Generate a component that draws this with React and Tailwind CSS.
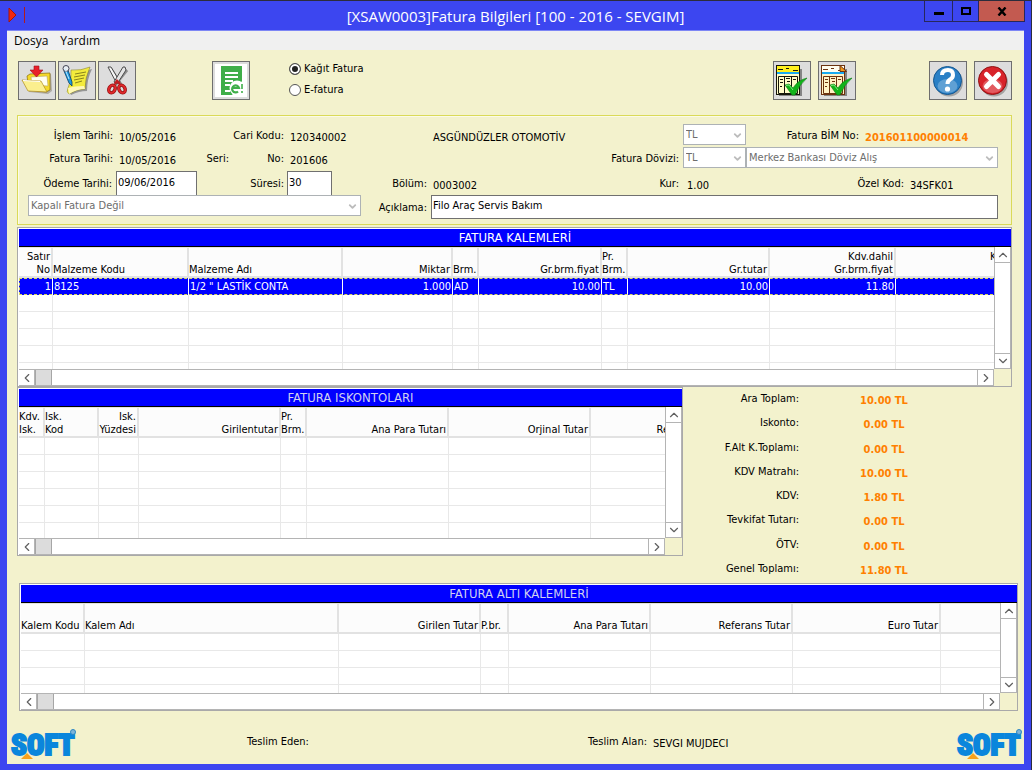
import React from 'react';
import { ChevronDown, ChevronUp, ChevronLeft, ChevronRight } from 'lucide-react';

const itemColumns = [
  { title: ['Satır', 'No'], width: 34, right: true },
  { title: ['Malzeme Kodu'], width: 136 },
  { title: ['Malzeme Adı'], width: 154 },
  { title: ['Miktar'], width: 110, right: true },
  { title: ['Brm.'], width: 26 },
  { title: ['Gr.brm.fiyat'], width: 123, right: true },
  { title: ['Pr.', 'Brm.'], width: 26 },
  { title: ['Gr.tutar'], width: 142, right: true },
  { title: ['Kdv.dahil', 'Gr.brm.fiyat'], width: 126, right: true },
  { title: ['Kdv.dahil', '\u00a0'], width: 142, right: true },
];

const itemRows = [
  ['1', '8125', '1/2 " LASTİK CONTA', '1.000', 'AD', '10.00', 'TL', '10.00', '11.80', ''],
];

const discountColumns = [
  { title: ['Kdv.', 'Isk.'], width: 26 },
  { title: ['Isk.', 'Kod'], width: 54 },
  { title: ['Isk.', 'Yüzdesi'], width: 40, right: true },
  { title: ['Girilentutar'], width: 142, right: true },
  { title: ['Pr.', 'Brm.'], width: 26 },
  { title: ['Ana Para Tutarı'], width: 142, right: true },
  { title: ['Orjinal Tutar'], width: 142, right: true },
  { title: ['Referans Tutar'], width: 140, right: true },
];

const extraColumns = [
  { title: ['Kalem Kodu'], width: 64 },
  { title: ['Kalem Adı'], width: 254 },
  { title: ['Girilen Tutar'], width: 142, right: true },
  { title: ['P.br.'], width: 28 },
  { title: ['Ana Para Tutarı'], width: 142, right: true },
  { title: ['Referans Tutar'], width: 142, right: true },
  { title: ['Euro Tutar'], width: 148, right: true },
  { title: [''], width: 142, right: true },
];

const totals = [
  ['Ara Toplam:', '10.00 TL'],
  ['Iskonto:', '0.00 TL'],
  ['F.Alt K.Toplamı:', '0.00 TL'],
  ['KDV Matrahı:', '10.00 TL'],
  ['KDV:', '1.80 TL'],
  ['Tevkifat Tutarı:', '0.00 TL'],
  ['ÖTV:', '0.00 TL'],
  ['Genel Toplamı:', '11.80 TL'],
];

function ToolButton({ label, children }) {
  return (
    <button
      type="button"
      aria-label={label}
      className="w-[38px] h-[39px] border border-[#6e6e6e] bg-[#dddddd] flex items-center justify-center"
    >
      {children}
    </button>
  );
}

function FolderIcon() {
  return (
    <svg width="34" height="34" viewBox="0 0 34 34">
      <path d="M9 12 L20 9 L22 11 L31 10 L32 27 L28 30 L9 28 Z" fill="#8f8a80" opacity="0.6" />
      <path d="M7 12 L10 10 L30 9 L30 26 L26 28 L9 26 Z" fill="#f5d928" stroke="#8a6d0c" strokeWidth="0.7" />
      <path d="M11 13 L27 12 L28 22 L12 21 Z" fill="#fffef0" stroke="#b9a860" strokeWidth="0.6" />
      <path d="M2 16 L21 17 L27 28 L8 27 Z" fill="#fbef8e" stroke="#b08d1c" strokeWidth="0.7" />
      <path d="M3 16.500 L20 17.500" stroke="#ffffff" />
      <path d="M14 2 H19 V6 H23 L16.500 13 L10 6 H14 Z" fill="#e8202a" stroke="#a30f18" strokeWidth="0.6" />
    </svg>
  );
}

function NoteIcon() {
  return (
    <svg width="34" height="34" viewBox="0 0 34 34">
      <path d="M14 7 Q24 8 32 5 Q27 15 27 27 Q19 27 11 31 L9 27 Q13 22 10 14 Z" fill="#777" opacity="0.7" />
      <path d="M11 6 Q21 7 30 3 Q25 14 25 25 Q17 25 9 30 Q6 28 8 24 Q12 16 11 6 Z" fill="#f3eb3c" stroke="#8c8728" strokeWidth="0.6" />
      <path d="M8 24 Q14 22 24 22 L25 25 Q17 25 9 30 Z" fill="#fff8b8" />
      <path d="M15 10 L26 8 M14 13 L25 11 M14 16 L24 14 M15 19 L22 17" stroke="#7d7818" strokeWidth="0.9" />
      <path d="M4 7 L8 6 L12 18 L12 22 L9 19 Z" fill="#1d9be0" stroke="#0b3f66" strokeWidth="0.8" />
      <circle cx="6" cy="4.500" r="3" fill="#e8eef4" stroke="#445" />
      <path d="M5 5 L9 15" stroke="#bfe7ff" />
    </svg>
  );
}

function ScissorsIcon() {
  return (
    <svg width="34" height="34" viewBox="0 0 34 34" fill="none">
      <path d="M11 5 L22 22 M27 6 L14 22" stroke="#8d8d8d" strokeWidth="3" />
      <path d="M8 3 L11 3 L20 18 L17 20 Z" fill="#f6f6f6" stroke="#4b4b4b" />
      <path d="M25 3 L23 3 L14 18 L17 20 L26 6 Z" fill="#e4e4e4" stroke="#4b4b4b" />
      <ellipse cx="12" cy="25" rx="3" ry="4" transform="rotate(28 12 25)" stroke="#8f1010" strokeWidth="3.400" />
      <ellipse cx="22" cy="25" rx="3" ry="4" transform="rotate(-28 22 25)" stroke="#8f1010" strokeWidth="3.400" />
      <ellipse cx="12" cy="25" rx="3" ry="4" transform="rotate(28 12 25)" stroke="#e0282c" strokeWidth="2" />
      <ellipse cx="22" cy="25" rx="3" ry="4" transform="rotate(-28 22 25)" stroke="#e0282c" strokeWidth="2" />
      <path d="M15 20 L17 17 L20 20" stroke="#c01c20" strokeWidth="2.500" />
    </svg>
  );
}

function InvoiceIcon() {
  return (
    <svg width="32" height="33" viewBox="0 0 32 33">
      <rect width="32" height="33" fill="#ffffff" />
      <path d="M6 2 H27 V17 L17 31 H6 Z" fill="#3fae49" />
      <path d="M10 9 H23 M10 13 H23 M10 17 H18 M10 21 H15 M10 27 H15" stroke="#ffffff" strokeWidth="1.800" />
      <circle cx="22" cy="24" r="7.500" fill="#ffffff" />
      <path d="M18 24 H24 A3.500 3.500 0 1 0 23 27.500" fill="none" stroke="#3fae49" strokeWidth="2.200" />
      <path d="M27 20 V25 M27 27 V29" stroke="#3fae49" strokeWidth="1.600" />
    </svg>
  );
}

function SheetIcon({ ink, head, paper, folded }) {
  return (
    <svg width="34" height="34" viewBox="0 0 34 34">
      <path d="M4 5 H27 V32 H4 Z" fill="#858585" />
      <rect x="1.500" y="1.500" width="23" height="29" fill={paper} stroke={ink} />
      <rect x="2" y="2" width="22" height="6" fill={head} />
      <rect x="2" y="8" width="22" height="2" fill="#18a9f0" />
      <path d="M3 5.500 H8 M11 4.500 H14 M18 6.500 H23" stroke={ink} />
      <path d="M3.500 12.500 H22.500 V29.500 H3.500 Z M9.500 12 V29 M16.500 12 V29" fill="none" stroke={ink} />
      <path d="M5 15.500 H8 M5 18.500 H8 M11 14.500 H15 M12 17.500 H15 M18 15.500 H21 M5 22.500 H7" stroke={ink} />
      {folded && <path d="M20 1.500 L26.500 7.500 H20 Z" fill="#f59a1c" stroke={ink} />}
      <path d="M10 21 L14 20 L18 24 Q23 16 32 14 Q24 21 20 31 L17 31 Z" fill="#12b31a" stroke="#0a7a10" strokeWidth="0.6" />
      <path d="M11 21.500 L14 21 L18 26" fill="none" stroke="#7dea7d" />
    </svg>
  );
}

function RoundIcon({ edge, fill, children }) {
  return (
    <svg width="34" height="34" viewBox="0 0 34 34" fill="none">
      <circle cx="18" cy="18.500" r="14" fill="#8a8a8a" opacity="0.7" />
      <circle cx="16.500" cy="16.500" r="14" fill={fill} stroke={edge} strokeWidth="1" />
      <ellipse cx="16.500" cy="22" rx="10" ry="7" fill="#ffffff" opacity="0.25" />
      {children}
    </svg>
  );
}

function Label({ className, htmlFor, children }) {
  return (
    <label htmlFor={htmlFor} className={`shrink-0 self-center pt-[2px] text-right whitespace-nowrap ${className}`}>
      {children}
    </label>
  );
}

function Value({ className, children }) {
  return <span className={`self-center pt-[6px] whitespace-nowrap ${className}`}>{children}</span>;
}

function Dropdown({ id, label, value, className }) {
  return (
    <div className={`relative h-[21px] ${className}`}>
      <select
        id={id}
        aria-label={label}
        disabled
        className="block w-full h-full appearance-none border border-[#adb2b5] bg-white pl-[2px] pr-4 text-[#6d6d6d] opacity-100"
      >
        <option>{value}</option>
      </select>
      <ChevronDown
        size={11}
        strokeWidth={4}
        className="absolute right-[3px] top-[6px] text-[#bcbcbc] pointer-events-none"
      />
    </div>
  );
}

function ScrollButton({ label, icon: Icon, className }) {
  return (
    <button
      type="button"
      aria-label={label}
      className={`shrink-0 flex items-center justify-center bg-white border-[#b4b4b4] text-[#606060] ${className}`}
    >
      <Icon size={14} strokeWidth={2} />
    </button>
  );
}

function Grid({ title, titleColor, columns, rows = [], blankRows, height, className = '' }) {
  const width = columns.reduce((sum, c) => sum + c.width, 0);
  return (
    <section className={`border border-[#a9a9a9] bg-white pl-px pt-px ${className}`}>
      <h2 className={`h-[18px] bg-[#0000ff] border-b border-black text-center text-[13px] leading-[18px] ${titleColor}`}>
        {title}
      </h2>
      <div className={`flex ${height}`}>
        <div className="flex-1 min-w-0 overflow-hidden">
          <table className="table-fixed border-separate border-spacing-0" style={{ width }}>
            <colgroup>
              {columns.map((c, i) => (
                <col key={i} style={{ width: c.width }} />
              ))}
            </colgroup>
            <thead>
              <tr>
                {columns.map((c, i) => (
                  <th
                    key={i}
                    className={`h-[31px] p-0 align-bottom font-normal leading-[13px] whitespace-nowrap bg-[#fcfcfc] border-t border-b-2 border-r-2 border-[#e2e2e2] ${
                      c.right ? 'text-right pr-px' : 'text-left'
                    }`}
                  >
                    {c.title.map((line, n) => (
                      <div key={n}>{line}</div>
                    ))}
                  </th>
                ))}
              </tr>
            </thead>
            <tbody>
              {rows.map((row, r) => (
                <tr
                  key={r}
                  className="bg-[#0000ff] text-white outline-1 outline-dashed outline-[#d8d860] -outline-offset-1"
                >
                  {row.map((cell, i) => (
                    <td
                      key={i}
                      className={`h-[17px] p-0 leading-4 whitespace-nowrap border-r border-white ${
                        columns[i].right ? 'text-right pr-px' : 'pl-px'
                      }`}
                    >
                      {cell}
                    </td>
                  ))}
                </tr>
              ))}
              {Array.from({ length: blankRows }).map((_, r) => (
                <tr key={r}>
                  {columns.map((c, i) => (
                    <td key={i} className="h-[17px] p-0 border-r border-b border-[#e8e8e8]" />
                  ))}
                </tr>
              ))}
            </tbody>
          </table>
        </div>
        <div className="w-[17px] shrink-0 flex flex-col justify-between border-x border-[#b4b4b4]">
          <ScrollButton label="Yukarı" icon={ChevronUp} className="h-4 border-b" />
          <ScrollButton label="Aşağı" icon={ChevronDown} className="h-4 border-y" />
        </div>
      </div>
      <div className="flex h-[17px]">
        <div className="flex-1 flex border-y border-[#b4b4b4]">
          <ScrollButton label="Sola" icon={ChevronLeft} className="w-4 border-r" />
          <div className="w-[17px] border-x border-[#a6a6a6] bg-[#dcdcdc]" />
          <div className="flex-1" />
          <ScrollButton label="Sağa" icon={ChevronRight} className="w-[17px] border-x" />
        </div>
        <div className="w-[17px] bg-[#f3f2cd]" />
      </div>
    </section>
  );
}

function SoftLogo() {
  return (
    <svg width="66" height="34" viewBox="0 0 66 34" role="img" aria-label="SOFT" className="shrink-0">
      <text
        x="1"
        y="28"
        fontFamily="Roboto Condensed, Open Sans Condensed, Roboto, sans-serif"
        fontSize="29"
        fontWeight="900"
        fill="#0a86dc"
        stroke="#0a86dc"
        strokeWidth="2"
      >
        SOFT
      </text>
      <path d="M17 26 L23 32 H11 Z" fill="#f9a11b" />
      <circle cx="63" cy="5" r="2.500" fill="#7db4d8" stroke="#2b86c4" />
    </svg>
  );
}

export default function App() {
  return (
    <div className="min-h-screen flex flex-col bg-[#3c46f0] border-t border-r border-[#2c2c3c] px-[7px] pb-[6px] font-['DejaVu_Sans_Condensed','DejaVu_Sans',sans-serif] text-[11px] leading-[14px] text-black">
      <header className="relative h-[30px] shrink-0 flex items-center justify-center border-b border-[#7d86f5]">
        <svg width="20" height="18" viewBox="0 0 20 18" className="absolute left-px top-[5px]">
          <path d="M1 2 L8 9 L1 16 Z" fill="#f02814" stroke="#a81408" />
          <path d="M16.500 1 V17" stroke="#b01c1c" />
        </svg>
        <h1 className="font-['Open_Sans',sans-serif] text-[15px] leading-5 text-white">
          [XSAW0003]Fatura Bilgileri [100 - 2016 - SEVGIM]
        </h1>
        <div className="absolute -right-px top-0 flex h-[21px] border border-t-0 border-[#27275c]">
          <button type="button" aria-label="Simge durumuna küçült" className="w-7 flex items-center justify-center border-r border-[#27275c]">
            <span className="w-[10px] h-[3px] mt-1 bg-black" />
          </button>
          <button type="button" aria-label="Ekranı kapla" className="w-[26px] flex items-center justify-center border-r border-[#27275c]">
            <span className="w-[10px] h-2 border-2 border-black" />
          </button>
          <button type="button" aria-label="Kapat" className="w-[45px] flex items-center justify-center bg-[#c35a50]">
            <svg width="10" height="9" viewBox="0 0 10 9">
              <path d="M1.500 0.500 L8.500 8.500 M8.500 0.500 L1.500 8.500" stroke="#000" strokeWidth="2.400" />
            </svg>
          </button>
        </div>
      </header>

      <div className="flex-1 flex flex-col bg-[#f3f2cd]">
        <nav className="h-[19px] shrink-0 flex items-center gap-3 bg-[#f0f0f0] pl-[7px] font-['Open_Sans',sans-serif] text-[12px]">
          <button type="button">Dosya</button>
          <button type="button">Yardım</button>
        </nav>

        <div className="flex items-start pl-[11px] pr-3 pt-[11px]">
          <div className="flex gap-[2px]">
            <ToolButton label="Kaydet"><FolderIcon /></ToolButton>
            <ToolButton label="Düzenle"><NoteIcon /></ToolButton>
            <ToolButton label="Sil"><ScissorsIcon /></ToolButton>
          </div>
          <div className="ml-[76px]">
            <ToolButton label="E-fatura"><InvoiceIcon /></ToolButton>
          </div>
          <div className="ml-[39px] flex flex-col gap-[7px] pt-px">
            {['Kağıt Fatura', 'E-fatura'].map((name, i) => (
              <label key={name} className="flex items-center gap-[3px]">
                <input
                  type="radio"
                  name="fatura"
                  defaultChecked={i === 0}
                  className="appearance-none size-3 rounded-full border border-[#555] bg-white checked:bg-[#222] checked:shadow-[inset_0_0_0_2px_white]"
                />
                {name}
              </label>
            ))}
          </div>
          <div className="ml-auto flex gap-[7px]">
            <ToolButton label="Onayla">
              <SheetIcon ink="#16160a" head="#fff01e" paper="#fffcc8" />
            </ToolButton>
            <ToolButton label="Belgeyi onayla">
              <SheetIcon ink="#6b3210" head="#fffdf0" paper="#fff1c4" folded />
            </ToolButton>
          </div>
          <div className="ml-[73px] flex gap-[7px]">
            <ToolButton label="Yardım">
              <RoundIcon edge="#14568f" fill="#2a80c6">
                <path d="M11 11 Q11 6 17 6 Q22 6 22 11 Q22 14 19 15.500 Q16.500 17 16.500 20" stroke="#fff" strokeWidth="4" />
                <circle cx="16.500" cy="25" r="2.600" fill="#fff" />
              </RoundIcon>
            </ToolButton>
            <ToolButton label="Çıkış">
              <RoundIcon edge="#8f1212" fill="#d8232a">
                <path d="M10.500 10.500 L22.500 22.500 M22.500 10.500 L10.500 22.500" stroke="#fff" strokeWidth="5" strokeLinecap="round" />
              </RoundIcon>
            </ToolButton>
          </div>
        </div>

        <main className="pl-[10px] pr-3 pt-[15px]">
          <form className="border border-[#dada58] shadow-[inset_1px_1px_0_#fbfbe6] pt-2 pb-[5px] pr-[13px]">
            <div className="flex h-[21px] mb-[2px]">
              <Label className="w-[95px]">İşlem Tarihi:</Label>
              <Value className="w-[84px] pl-[6px]">10/05/2016</Value>
              <Label className="w-[87px]">Cari Kodu:</Label>
              <Value className="w-[143px] pl-[6px]">120340002</Value>
              <Value className="flex-1 pl-[6px]">ASGÜNDÜZLER OTOMOTİV</Value>
              <Dropdown label="Para birimi" value="TL" className="w-[63px]" />
              <Label className="w-[113px]">Fatura BİM No:</Label>
              <Value className="w-[139px] pl-[6px] font-bold text-[#ff8000]">201601100000014</Value>
            </div>
            <div className="flex h-[21px] mb-[3px]">
              <Label className="w-[95px]">Fatura Tarihi:</Label>
              <Value className="w-[84px] pl-[6px]">10/05/2016</Value>
              <Label className="w-[32px]">Seri:</Label>
              <Label className="w-[55px]">No:</Label>
              <Value className="pl-[6px]">201606</Value>
              <Label htmlFor="doviz" className="ml-auto pr-1">Fatura Dövizi:</Label>
              <Dropdown id="doviz" value="TL" className="w-[63px]" />
              <Dropdown label="Kur türü" value="Merkez Bankası Döviz Alış" className="w-[252px]" />
            </div>
            <div className="flex h-6">
              <Label htmlFor="odeme" className="w-[95px] pr-px">Ödeme Tarihi:</Label>
              <input
                id="odeme"
                defaultValue="09/06/2016"
                className="ml-[3px] w-[81px] border border-b-0 border-[#707070] bg-white px-px pb-px"
              />
              <Label htmlFor="sure" className="w-[87px]">Süresi:</Label>
              <input
                id="sure"
                defaultValue="30"
                className="ml-[3px] w-[45px] border border-b-0 border-[#707070] bg-white px-px pb-px"
              />
              <Label className="w-[95px]">Bölüm:</Label>
              <Value className="pl-[6px]">0003002</Value>
              <Label className="ml-auto pr-1">Kur:</Label>
              <Value className="w-[63px] pl-1">1.00</Value>
              <Label className="w-[158px]">Özel Kod:</Label>
              <Value className="w-[94px] pl-[6px]">34SFK01</Value>
            </div>
            <div className="flex h-6">
              <Dropdown label="Fatura durumu" value="Kapalı Fatura Değil" className="ml-[10px] w-[333px]" />
              <Label htmlFor="aciklama" className="w-[66px]">Açıklama:</Label>
              <input
                id="aciklama"
                defaultValue="Filo Araç Servis Bakım"
                className="ml-1 flex-1 min-w-0 border border-[#707070] bg-white px-px pb-[3px]"
              />
            </div>
          </form>

          <Grid
            title="FATURA KALEMLERİ"
            titleColor="text-white"
            columns={itemColumns}
            rows={itemRows}
            blankRows={5}
            height="h-[122px]"
            className="mt-[2px]"
          />

          <div className="flex items-start">
            <Grid
              title="FATURA ISKONTOLARI"
              titleColor="text-[#d0d0f0]"
              columns={discountColumns}
              blankRows={7}
              height="h-[131px]"
              className="w-[666px] shrink-0"
            />
            <dl className="h-[194px] flex-1 flex flex-col">
              {totals.map(([name, amount]) => (
                <div key={name} className="flex-1 flex items-center">
                  <dt className="w-[116px] text-right">{name}</dt>
                  <dd className="w-[170px] pt-1 text-center font-bold text-[#ff8000]">{amount}</dd>
                </div>
              ))}
            </dl>
          </div>
        </main>

        <div className="pl-3 pr-[6px] pt-[2px]">
          <Grid
            title="FATURA ALTI KALEMLERİ"
            titleColor="text-[#d0d0f0]"
            columns={extraColumns}
            blankRows={4}
            height="h-[90px]"
          />
        </div>

        <footer className="flex items-center pl-[3px] pr-[2px] pt-4">
          <SoftLogo />
          <span className="ml-[171px] mb-1">Teslim Eden:</span>
          <span className="ml-auto mb-1">Teslim Alan:</span>
          <span className="w-[309px] pl-[6px]">SEVGI MUJDECI</span>
          <SoftLogo />
        </footer>
      </div>
    </div>
  );
}
